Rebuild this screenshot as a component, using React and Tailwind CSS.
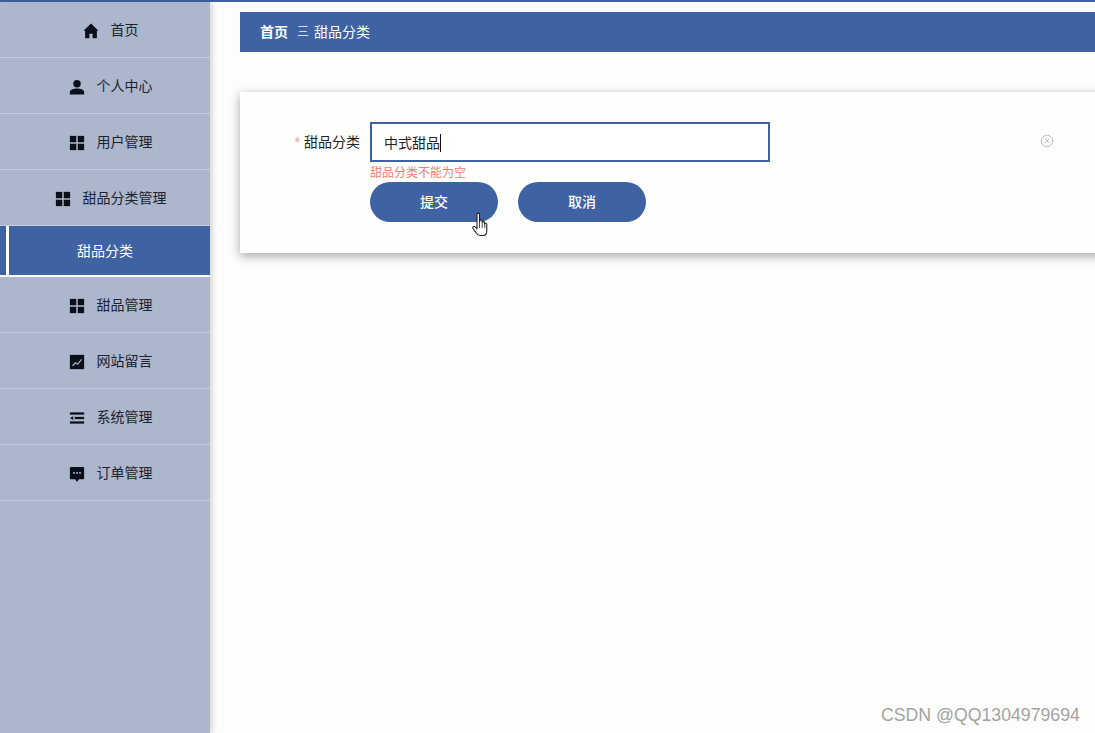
import { CircleX } from 'lucide-react';

const font = { fontFamily: '"Liberation Sans", "Noto Sans CJK SC", sans-serif' };

const Home = () => (
  <svg viewBox="0 0 24 24" className="w-[18px] h-[18px]" fill="#0b0f1a"><path d="M12 2 2 11.500h2.200V21.500h5.600v-6h4.400v6h5.600V11.500H22z" /></svg>
);
const User = () => (
  <svg viewBox="0 0 24 24" className="w-[18px] h-[18px]" fill="#0b0f1a"><circle cx="12" cy="7.500" r="5" /><path d="M2.500 22v-3.500c0-3 5.500-4.500 9.500-4.500s9.500 1.500 9.500 4.500V22z" /></svg>
);
const Grid = () => (
  <svg viewBox="0 0 24 24" className="w-[18px] h-[18px]" fill="#0b0f1a"><rect x="2.500" y="2.500" width="8.500" height="8.500" /><rect x="13" y="2.500" width="8.500" height="8.500" /><rect x="2.500" y="13" width="8.500" height="8.500" /><rect x="13" y="13" width="8.500" height="8.500" /></svg>
);
const Chart = () => (
  <svg viewBox="0 0 24 24" className="w-[18px] h-[18px]"><rect x="2.500" y="2.500" width="19" height="19" fill="#0b0f1a" /><path d="M6 17l4-4 3 2 5-6.500" fill="none" stroke="#acb6cc" strokeWidth="1.600" /></svg>
);
const Lines = () => (
  <svg viewBox="0 0 24 24" className="w-[18px] h-[18px]" fill="#0b0f1a"><rect x="2.500" y="4.500" width="19" height="3" /><rect x="9" y="10.500" width="12.500" height="3" /><path d="M2.500 12l4.500-2.500v5z" /><rect x="2.500" y="16.500" width="19" height="3" /></svg>
);
const Chat = () => (
  <svg viewBox="0 0 24 24" className="w-[18px] h-[18px]" fill="#0b0f1a"><path d="M4 2.500h16A1.500 1.500 0 0 1 21.500 4v13.500A1.500 1.500 0 0 1 20 19h-5.500L12 22.500 9.500 19H4a1.500 1.500 0 0 1-1.500-1.500V4A1.500 1.500 0 0 1 4 2.500z" /><circle cx="8" cy="10.500" r="1.300" fill="#acb6cc" /><circle cx="12" cy="10.500" r="1.300" fill="#acb6cc" /><circle cx="16" cy="10.500" r="1.300" fill="#acb6cc" /></svg>
);

const Hand = () => (
  <svg viewBox="0 0 18 26" className="w-[18px] h-[26px]" fill="#fff" stroke="#222" strokeWidth="1.100" strokeLinejoin="round">
    <path d="M5 2.500c0-1.800 2.500-1.800 2.500 0v8l.4-2c.4-1.300 2.300-1 2.300.4v1.600c.3-1.300 2.300-1.100 2.300.4v1c.4-1.100 2.300-.9 2.300.6v6c0 2.500-1.300 5-4 5H8c-1.800 0-2.800-.9-3.800-2.500L1 16.500c-.9-1.600 1-2.800 2.200-1.500L5 17z" />
    <path d="M7.500 11v5M10.200 11v5M12.800 12v4" fill="none" strokeWidth="0.800" />
  </svg>
);

const menu = [
  { label: '首页', icon: <Home /> },
  { label: '个人中心', icon: <User /> },
  { label: '用户管理', icon: <Grid /> },
  { label: '甜品分类管理', icon: <Grid /> },
  { label: '甜品分类', active: true },
  { label: '甜品管理', icon: <Grid /> },
  { label: '网站留言', icon: <Chart /> },
  { label: '系统管理', icon: <Lines /> },
  { label: '订单管理', icon: <Chat /> },
];

export default function App() {
  return (
    <div className="relative w-[1095px] h-[733px] overflow-hidden bg-[#fdfdfc] text-[14px]" style={font}>
      <div className="h-[2px] bg-[#3f62a2]" />
      <div className="flex h-[731px]">
        {/* Sidebar */}
        <aside className="w-[210px] shrink-0 bg-[#acb6cc] shadow-[2px_0_6px_rgba(0,0,0,0.18)]">
          {menu.map((m) =>
            m.active ? (
              <div key={m.label} className="h-[51px] flex bg-[#fdfdfc] pb-[2px]">
                <div className="w-[6px] bg-[#3f62a2]" />
                <div className="w-[3px]" />
                <div className="flex-1 bg-[#3f62a2] text-white flex items-center justify-center pr-[9px] pt-[2px]">{m.label}</div>
              </div>
            ) : (
              <div key={m.label} className="h-[56px] border-b border-[#c6cedd] flex items-center justify-center gap-[11px] pl-[10px] pt-[2px] text-[#1c2230]">
                {m.icon}
                <span>{m.label}</span>
              </div>
            )
          )}
        </aside>

        {/* Main */}
        <main className="w-[900px] shrink-0 pl-[30px] pt-[10px]">
          <div className="h-[40px] bg-[#3f62a2] text-white flex items-center pl-[20px]">
            <span className="font-bold">首页</span>
            <span className="ml-[9px] mr-[5px] text-[#d5dcea] text-[12px]">三</span>
            <span>甜品分类</span>
          </div>

          <div className="mt-[40px] h-[161px] bg-[#fefefd] shadow-[0_3px_10px_rgba(0,0,0,0.35)] pt-[30px]">
            <div className="flex">
              <label className="w-[130px] h-[40px] pr-[10px] flex items-center justify-end text-[#222]">
                <span className="text-[#f0a0a8] mr-[4px]">*</span>甜品分类
              </label>
              <div className="w-[400px]">
                <div className="h-[40px] border-2 border-[#3f62a2] bg-white flex items-center pl-[12px] pt-px text-[#222]">
                  <span className="border-r border-[#111] leading-[18px]">中式甜品</span>
                </div>
                <p className="h-[20px] text-[12px] leading-[23px] text-[#ea7f78]">甜品分类不能为空</p>
                <div className="flex gap-[20px]">
                  <button className="w-[128px] h-[40px] rounded-full bg-[#3f62a2] text-white font-medium">提交</button>
                  <button className="w-[128px] h-[40px] rounded-full bg-[#3f62a2] text-white font-medium">取消</button>
                </div>
              </div>
              <div className="ml-[270px] h-[38px] flex items-center">
                <CircleX className="w-[14px] h-[14px] text-[#b4b4b4]" strokeWidth={1.500} />
              </div>
            </div>
          </div>
        </main>
      </div>

      {/* mouse cursor from the recording */}
      <div className="absolute left-[472px] top-[212px]"><Hand /></div>
      {/* CSDN watermark */}
      <div className="absolute left-[881px] top-[704px] text-[17.7px] leading-[22px] text-[#a3a3a3]">CSDN @QQ1304979694</div>
    </div>
  );
}
